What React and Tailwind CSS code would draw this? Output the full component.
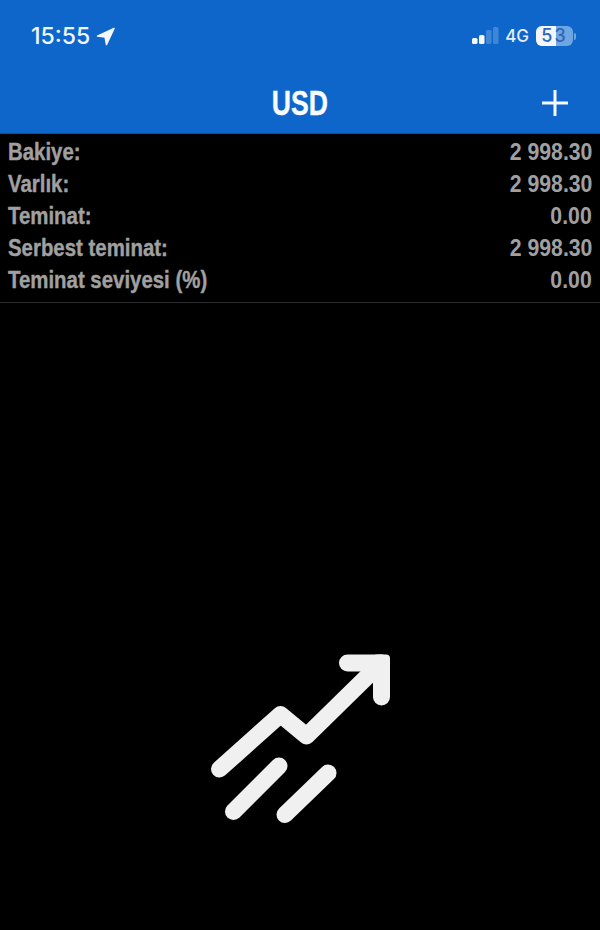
const rows = [
  ["Bakiye:", "2 998.30"],
  ["Varlık:", "2 998.30"],
  ["Teminat:", "0.00"],
  ["Serbest teminat:", "2 998.30"],
  ["Teminat seviyesi (%)", "0.00"],
];

export default function App() {
  return (
    <div className="w-[600px] h-[930px] bg-black overflow-hidden font-['Liberation_Sans',sans-serif]">
      <header className="h-[134px] bg-[#0e66cb] border-b border-[#0a4a96] flex flex-col">
        <div className="h-[72px] flex items-center justify-between pl-[31px] pr-[24px]">
          <div className="flex items-center gap-[6px]">
            <span className="font-['Inter',sans-serif] text-[23px] leading-none font-medium text-[#f0f6fd]">15:55</span>
            <svg width="19" height="19" viewBox="0 0 20 20" aria-hidden="true">
              <path d="M19 1.5 L1.5 9.5 L9.5 10.5 L11 18.5 Z" fill="#f4f8fd" stroke="#f4f8fd" strokeWidth="1.5" strokeLinejoin="round" />
            </svg>
          </div>
          <div className="flex items-center gap-[6px]">
            <svg width="28" height="20" viewBox="0 0 28 20" aria-hidden="true">
              <rect x="1" y="12" width="5.5" height="6" rx="1.5" fill="#f4f8fd" />
              <rect x="8" y="9" width="5.5" height="9" rx="1.5" fill="#f4f8fd" />
              <rect x="15" y="4" width="5.5" height="14" rx="1.5" fill="#3f86d6" />
              <rect x="22" y="1" width="5.5" height="17" rx="1.5" fill="#3f86d6" />
            </svg>
            <span className="font-['Inter',sans-serif] text-[17px] leading-none font-medium text-[#e4eefa]">4G</span>
            <div className="flex items-center gap-[1px] ml-[1px]">
              <div className="relative w-[37px] h-[20px] rounded-[6px] bg-[#6ea6e4] overflow-hidden flex items-center justify-center">
                <div className="absolute left-0 top-0 bottom-0 w-[20px] bg-[#f2f6fc]" />
                <span className="relative font-['Inter',sans-serif] text-[18px] tracking-[2px] leading-none font-medium text-[#2f66b4]">53</span>
              </div>
              <div className="w-[2px] h-[7px] rounded-r-sm bg-[#6ea6e4]" />
            </div>
          </div>
        </div>
        <div className="relative flex-1 flex items-center justify-center">
          <span className="scale-x-[0.76] font-bold text-[35px] leading-none text-[#f8fbff] [-webkit-text-stroke:0.4px_#f8fbff]">USD</span>
          <svg className="absolute left-[541px] top-[17px]" width="28" height="28" viewBox="0 0 28 28" aria-hidden="true">
            <path d="M1 14 H27 M14 1 V27" stroke="#f6f9fe" strokeWidth="3" />
          </svg>
        </div>
      </header>

      <section className="h-[169px] border-b border-[#2b2b2b] pt-[2px] px-[8px] font-bold text-[24px] text-[#a0a0a0]">
        {rows.map(([label, value]) => (
          <div key={label} className="h-[32px] flex items-center justify-between leading-none">
            <span className="origin-left scale-x-[0.85] [-webkit-text-stroke:0.4px_#a0a0a0]">{label}</span>
            <span className="origin-right scale-x-[0.885]">{value}</span>
          </div>
        ))}
      </section>

      <svg className="block mx-auto mt-[337px]" width="220" height="190" viewBox="0 0 220 190" aria-hidden="true">
        <g fill="none" stroke="#f0f0f1" strokeWidth="17" strokeLinecap="round" strokeLinejoin="round">
          <path d="M29.5 129 L90.5 74.5 L116.5 96 L191 23" />
          <path d="M157.5 23 H191.5 V57" />
          <path d="M43.5 171.5 L89 126" />
          <path d="M95 174.5 L138 133" />
        </g>
        <rect x="183" y="14.5" width="17" height="17" rx="4" fill="#f0f0f1" />
      </svg>
    </div>
  );
}
